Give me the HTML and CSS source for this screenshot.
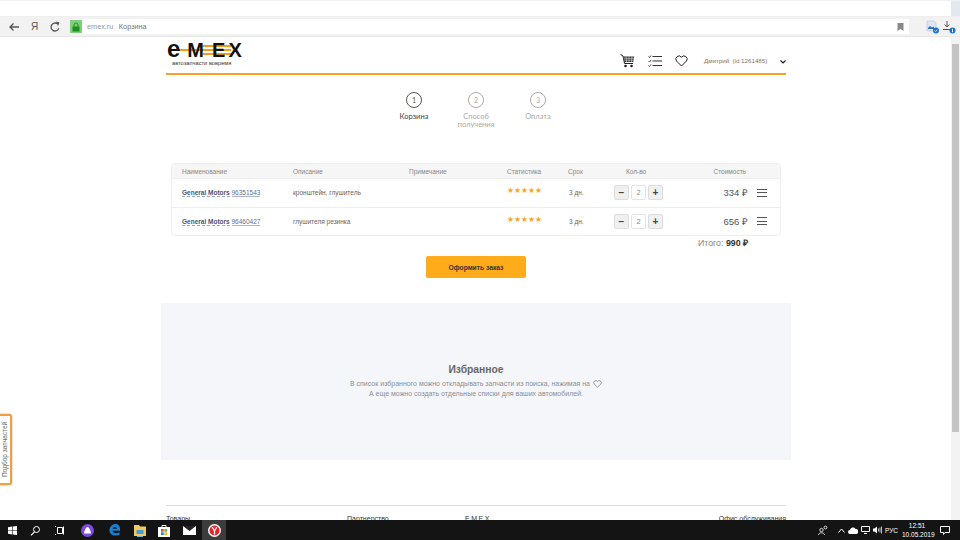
FILE: index.html

```html
<!DOCTYPE html>
<html lang="ru">
<head>
  <meta charset="UTF-8" />
  <title>Корзина</title>
  <link rel="stylesheet" href="styles.css">
</head>
<body>
<div class="screen">

  <div class="tabstrip"><div class="tabstrip-end"></div></div>

  <div class="toolbar">
    <svg class="tb-ico back" width="12" height="12" viewBox="0 0 12 12"><path d="M11 6H2M5.500 2.500 2 6l3.500 3.500" fill="none" stroke="#555" stroke-width="1.300"/></svg>
    <span class="ya">Я</span>
    <svg class="tb-ico reload" width="12" height="12" viewBox="0 0 12 12"><path d="M9.800 7.500A4 4 0 1 1 8.500 2.800" fill="none" stroke="#555" stroke-width="1.300"/><path d="M7 .5 10.500 1.500 9 5z" fill="#555"/></svg>
    <div class="address">
      <span class="lock-box">
        <svg width="8" height="10" viewBox="0 0 8 10"><path d="M2 5V3a2 2 0 0 1 4 0v2" fill="none" stroke="#1f8f1f"/><rect x=".5" y="4.500" width="7" height="5" fill="#1f8f1f"/></svg>
      </span>
      <span class="host">emex.ru</span>
      <span class="page-title">Корзина</span>
      <svg class="bookmark" width="7" height="8" viewBox="0 0 7 8"><path d="M.5 0h6v8L3.500 6 .5 8z" fill="#8a8a8a"/></svg>
    </div>
    <svg class="ext" width="14" height="14" viewBox="0 0 14 14"><path d="M1 1h7l2 2v8H1z" fill="#dfe6f2" stroke="#b9c4d6" stroke-width=".6"/><path d="M2 8l2-2 2 1.500 2-1v2.500H2z" fill="#2a6fc0"/><circle cx="10" cy="10.500" r="3" fill="#1a73d8"/><path d="M8.700 10.500l1 1 1.600-1.800" fill="none" stroke="#fff" stroke-width=".8"/></svg>
    <svg class="ext" width="14" height="14" viewBox="0 0 14 14"><path d="M5 1v6M2.500 4.500 5 7l2.500-2.500M1 9.500h8" fill="none" stroke="#555" stroke-width="1"/><circle cx="10.500" cy="10.500" r="3" fill="#1a73d8"/><rect x="10" y="8.800" width="1" height="3.400" fill="#fff"/></svg>
  </div>

  <div class="viewport">
    <div class="page">

      <header class="site-head">
        <div class="logo">
          <div class="logo-word"><span class="logo-e">e</span><span>M</span><span>E</span><span class="logo-x">X</span></div>
          <div class="logo-sub">автозапчасти вовремя</div>
        </div>
        <nav class="head-icons">
          <svg width="15" height="14" viewBox="0 0 15 14"><path d="M.5.500l2.500 1.500 1.500 7.500h8.500" fill="none" stroke="#222"/><path d="M3.200 2.500h11l-1 5.500H4.300z" fill="#333"/><path d="M3.500 4.300h10.500M4 6.200h9.500M6 2.500 6.500 8M9 2.500V8M12 2.500 11.500 8" stroke="#fff" stroke-width=".5"/><circle cx="5.500" cy="12" r="1.300" fill="#222"/><circle cx="11.500" cy="12" r="1.300" fill="#222"/></svg>
          <svg width="14" height="12" viewBox="0 0 14 12"><path d="M.5 1.500l1 1 1.500-2M.5 6l1 1 1.500-2M.5 10.500l1 1 1.500-2" fill="none" stroke="#333" stroke-width=".9"/><path d="M4.500 1.500H14M4.500 6H14M4.500 10.500H14" stroke="#333" stroke-width="1"/></svg>
          <svg width="13" height="12" viewBox="0 0 13 12"><path d="M6.500 11 1.500 6A3 3 0 0 1 6.500 2.200 3 3 0 0 1 11.500 6z" fill="none" stroke="#222" stroke-width="1"/></svg>
        </nav>
        <div class="user">Дмитрий&nbsp; (id 1261485)</div>
        <svg class="user-arrow" width="6" height="4" viewBox="0 0 6 4"><path d="M.5.500 3 3 5.500.5" fill="none" stroke="#222" stroke-width="1.200"/></svg>
      </header>

      <div class="steps">
        <div class="step active"><span class="step-num">1</span><span class="step-name">Корзина</span></div>
        <div class="step"><span class="step-num">2</span><span class="step-name">Способ получения</span></div>
        <div class="step"><span class="step-num">3</span><span class="step-name">Оплата</span></div>
      </div>

      <div class="cart">
        <div class="cart-row cart-head">
          <div>Наименование</div>
          <div>Описание</div>
          <div>Примечание</div>
          <div>Статистика</div>
          <div>Срок</div>
          <div class="qty-title">Кол-во</div>
          <div class="cost-title">Стоимость</div>
        </div>
        <div class="cart-row">
          <div><a class="brand">General Motors</a> <a class="num">96351543</a></div>
          <div>кронштейн, глушитель</div>
          <div></div>
          <div class="stars">★★★★★</div>
          <div class="term">3 дн.</div>
          <div class="qty"><span class="qty-btn">−</span><span class="qty-val">2</span><span class="qty-btn">+</span></div>
          <div class="price">334 ₽</div>
          <div class="burger"><span></span><span></span><span></span></div>
        </div>
        <div class="cart-row">
          <div><a class="brand">General Motors</a> <a class="num">96460427</a></div>
          <div>глушителя резинка</div>
          <div></div>
          <div class="stars">★★★★★</div>
          <div class="term">3 дн.</div>
          <div class="qty"><span class="qty-btn">−</span><span class="qty-val">2</span><span class="qty-btn">+</span></div>
          <div class="price">656 ₽</div>
          <div class="burger"><span></span><span></span><span></span></div>
        </div>
      </div>

      <div class="total">Итого: <b>990 ₽</b></div>

      <div class="order-wrap"><button class="order">Оформить заказ</button></div>

      <section class="favs">
        <h2>Избранное</h2>
        <p>В список избранного можно откладывать запчасти из поиска, нажимая на
          <svg width="9" height="8" viewBox="0 0 13 12"><path d="M6.500 11 1.500 6A3 3 0 0 1 6.500 2.200 3 3 0 0 1 11.500 6z" fill="none" stroke="#777" stroke-width="1.100"/></svg></p>
        <p>А еще можно создать отдельные списки для ваших автомобилей.</p>
      </section>

      <footer class="foot">
        <div>Товары</div>
        <div>Партнерство</div>
        <div class="foot-emex">EMEX</div>
        <div>Офис обслуживания</div>
      </footer>
    </div>

    <div class="scrollbar"><div class="scroll-thumb"></div></div>
    <div class="side-tab">Подбор запчастей</div>
  </div>

  <div class="taskbar">
    <svg class="task-ico" width="9" height="9" viewBox="0 0 9 9"><path d="M0 1.200 4 .6V4.200H0zM4.600.5 9 0V4.200H4.600zM0 4.800h4v3.600L0 7.800zM4.600 4.800H9V9L4.600 8.400z" fill="#fff"/></svg>
    <svg class="task-ico" width="11" height="11" viewBox="0 0 11 11"><circle cx="6.500" cy="4.500" r="3" fill="none" stroke="#fff"/><path d="M4.500 6.800 1 10.300" stroke="#fff" stroke-width="1.200"/></svg>
    <svg class="task-ico" width="10" height="9" viewBox="0 0 10 9"><path d="M1 .5h1M1 8.500h1M3.500 1.500h5v6h-5zM9.500.5v8" fill="none" stroke="#fff"/></svg>
    <svg class="task-ico wide" width="13" height="13" viewBox="0 0 13 13"><circle cx="6.500" cy="6.500" r="6.500" fill="#7b4be0"/><path d="M3 9.500C3.500 6 5 3 6.500 3S9.500 6 10 9.500z" fill="#fff"/></svg>
    <svg class="task-ico mid" width="12" height="12" viewBox="0 0 12 12"><path d="M11 6.800H3.500C3.800 9.500 7.500 10 10.500 8.300V10.800C6 12.800 .5 11 .5 6.300 .5 2.500 3.500 0 6.500 0 9.500 0 11.500 2.500 11 6.800zM3.600 4.800H8C8 2.500 4 2.500 3.600 4.800z" fill="#1582d8"/></svg>
    <svg class="task-ico tb-open" width="12" height="11" viewBox="0 0 12 11"><path d="M0 0h5l1 1.500h6V11H0z" fill="#f2c75c"/><rect x="2.500" y="5" width="7" height="4" fill="#3da0d8"/></svg>
    <svg class="task-ico tight" width="12" height="13" viewBox="0 0 12 13"><path d="M4 3V1.500h4V3" fill="none" stroke="#fff"/><rect y="3" width="12" height="10" fill="#fff"/><rect x="3" y="5" width="2.700" height="2.700" fill="#e5482d"/><rect x="6.300" y="5" width="2.700" height="2.700" fill="#6cb33f"/><rect x="3" y="8.300" width="2.700" height="2.700" fill="#1582d8"/><rect x="6.300" y="8.300" width="2.700" height="2.700" fill="#f5b81c"/></svg>
    <svg class="task-ico" width="13" height="9" viewBox="0 0 13 9"><rect width="13" height="9" fill="#fff"/><path d="M0 0 6.500 5 13 0z" fill="#222"/></svg>
    <div class="task-active"><svg width="13" height="13" viewBox="0 0 13 13"><circle cx="6.500" cy="6.500" r="6.500" fill="#fff"/><circle cx="6.500" cy="6.500" r="5" fill="#e3242b"/><path d="M4.200 3 6.500 7 8.800 3M6.500 7v3.500" fill="none" stroke="#fff" stroke-width="1.300"/></svg></div>
    <div class="tray">
      <svg width="10" height="10" viewBox="0 0 10 10"><circle cx="3.500" cy="5" r="1.700" fill="none" stroke="#fff" stroke-width=".8"/><circle cx="7.500" cy="2.500" r="1.400" fill="none" stroke="#fff" stroke-width=".8"/><path d="M.5 10c0-3 6-3 6 0" fill="none" stroke="#fff" stroke-width=".8"/></svg>
      <svg class="tray-up" width="7" height="5" viewBox="0 0 7 5"><path d="M.5 4.500 3.500 1l3 3.500" fill="none" stroke="#fff"/></svg>
      <svg width="10" height="7" viewBox="0 0 10 7"><path d="M2 7a2 2 0 0 1 0-4 3 3 0 0 1 5.500-1A2.500 2.500 0 0 1 8 7z" fill="#fff"/></svg>
      <svg width="9" height="8" viewBox="0 0 9 8"><path d="M.5.500h8v5h-8zM3 7.500h3" fill="none" stroke="#fff"/></svg>
      <svg width="9" height="8" viewBox="0 0 9 8"><path d="M0 2.500h1.500L4 .5v7L1.500 5.500H0z" fill="#fff"/><path d="M5.500 2.500v3M7 1.500v5M8.500.5v7" stroke="#fff" stroke-width=".7"/></svg>
      <span class="lang">РУС</span>
      <div class="clock"><div>12:51</div><div>10.05.2019</div></div>
      <svg class="notif" width="10" height="9" viewBox="0 0 10 9"><path d="M.5.500h9v6H5L3.500 8.500v-2H.5z" fill="none" stroke="#fff"/></svg>
    </div>
  </div>

</div>
</body>
</html>
```

FILE: styles.css

```css
* { box-sizing: border-box; }
html, body { margin: 0; height: 100%; overflow: hidden; }
body { font-family: "Liberation Sans", Arial, sans-serif; color: #555; background: #fff; }
svg { display: block; flex: none; }

.screen { width: 960px; height: 540px; display: flex; flex-direction: column; overflow: hidden; }

/* browser chrome */
.tabstrip { height: 17px; flex: none; display: flex; justify-content: flex-end; border-top: 1px solid #f0f1f3; border-bottom: 1px solid #eee; }
.tabstrip-end { width: 9px; background: #e3e7f0; }
.toolbar { height: 20px; flex: none; display: flex; align-items: center; background: #f2f2f2; border-bottom: 1px solid #e6e6e6; }
.tb-ico.back { margin-left: 8px; }
.ya { margin-left: 11px; width: 8px; font-size: 10px; color: #555; }
.tb-ico.reload { margin-left: 10px; }
.address { margin-left: 9px; width: 839px; height: 15px; flex: none; display: flex; align-items: center; background: #fff; font-size: 7.300px; }
.lock-box { width: 12px; height: 13px; margin-right: 5px; display: flex; align-items: center; justify-content: center; background: #7ed07a; }
.host { color: #999; margin-right: 5.500px; }
.page-title { color: #777; }
.bookmark { margin-left: auto; margin-right: 5px; }
.address + .ext { margin-left: 17px; }
.ext + .ext { margin-left: 2px; }

.viewport { flex: 1; position: relative; display: flex; min-height: 0; overflow: hidden; }
.page { width: 620px; margin-left: 166px; flex: none; }
.scrollbar { margin-left: auto; width: 9px; padding-top: 7px; background: #f3f3f3; }
.scroll-thumb { height: 388px; background: #c4c4c4; margin: 0 1px; }

/* site header */
.site-head { height: 38px; display: flex; align-items: flex-start; border-bottom: 2px solid #f7a128; }
.logo { width: 454px; flex: none; padding-top: 1px; }
.logo-word {
  width: 75px; height: 21px; display: flex; align-items: baseline; gap: 8px;
  font: bold 20px/21px "Liberation Sans", sans-serif; color: #111;
  background:
    linear-gradient(#f59a1b, #f59a1b) 37px 7px / 28px 2px no-repeat,
    linear-gradient(#f59a1b, #f59a1b) 11px 11px / 54px 2px no-repeat,
    linear-gradient(#f59a1b, #f59a1b) 37px 15px / 28px 2px no-repeat;
}
.logo-e { font-size: 24px; margin-left: 1px; margin-right: -1px; }
.logo-x { margin-left: -5px; }
.logo-sub { margin: 1px 0 0 6px; font-size: 5.700px; line-height: 7px; color: #333; white-space: nowrap; }
.head-icons { display: flex; align-items: center; gap: 13px; width: 84px; height: 14px; margin-top: 17px; flex: none; }
.user { margin-top: 20px; font-size: 6.200px; line-height: 8px; color: #777; white-space: nowrap; }
.user-arrow { margin-left: auto; margin-top: 23px; }

/* steps */
.steps { display: flex; justify-content: center; padding-top: 17px; height: 88px; }
.step { width: 62px; display: flex; flex-direction: column; align-items: center; font-family: Lato, sans-serif; color: #aaa; }
.step-num { width: 16px; height: 16px; border: 1px solid #aaa; border-radius: 50%; font-size: 7px; display: flex; align-items: center; justify-content: center; }
.step-name { margin-top: 5px; width: 44px; text-align: center; font-size: 7.500px; line-height: 8px; }
.step.active .step-num { border-color: #555; color: #555; }
.step.active .step-name { color: #444; }

/* cart table */
.cart { margin: 0 5px; width: 610px; border: 1px solid #eee; border-radius: 4px; overflow: hidden; }
.cart-row { display: grid; grid-template-columns: 111px 116px 98px 61px 46px 92px 42px 1fr; align-items: center; height: 28.500px; padding-left: 10px; font-size: 6.500px; color: #666; border-top: 1px solid #eee; }
.cart-head { height: 14px; border-top: 0; background: #f6f6f6; color: #888; }
.qty-title { padding-left: 12px; }
.cost-title { justify-self: end; padding-right: 2px; white-space: nowrap; }
.brand { font-weight: bold; color: #4a5676; border-bottom: 1px dashed #9aa5bf; }
.num { color: #5d6f95; border-bottom: 1px solid #aab4ca; }
.stars { color: #f9a825; font: 7.800px/8px "DejaVu Sans", sans-serif; margin-top: -3px; white-space: nowrap; }
.term { padding-left: 1px; }
.qty { display: flex; gap: 2px; }
.qty-btn { width: 15px; height: 15px; display: flex; align-items: center; justify-content: center; background: #f0f0f0; border: 1px solid #ddd; border-radius: 2px; font-size: 10px; font-weight: bold; color: #444; }
.qty-val { width: 15px; height: 15px; display: flex; align-items: center; justify-content: center; border: 1px solid #e4e4e4; border-radius: 2px; font-size: 7.500px; color: #888; }
.price { text-align: right; font-size: 9.500px; color: #555; white-space: nowrap; }
.burger { margin-left: 9px; width: 10px; display: flex; flex-direction: column; gap: 2.500px; }
.burger span { height: 1px; background: #555; }

.total { margin: 2px 0 0; padding-right: 38px; text-align: right; font-size: 8.800px; line-height: 11px; color: #888; }
.total b { color: #333; }

.order-wrap { display: flex; justify-content: center; margin-top: 7px; }
.order { width: 100px; height: 22px; padding: 0; border: none; border-radius: 2px; background: #ffab1a; color: #333; font: bold 6.700px "Liberation Sans", sans-serif; }

/* favourites */
.favs { width: 630px; height: 157px; margin: 25px 0 0 -5px; padding-top: 60px; background: #f5f6f9; text-align: center; }
.favs h2 { margin: 0 0 2px; font-size: 10.300px; line-height: 14px; color: #666; }
.favs p { margin: 0; font-size: 7px; line-height: 10px; color: #8b8f96; display: flex; justify-content: center; align-items: center; gap: 3px; }

.foot { margin-top: 45px; padding-top: 8px; border-top: 1px solid #ddd; display: grid; grid-template-columns: 181px 118px 1fr auto; font-size: 7px; line-height: 9px; color: #333; }
.foot-emex { letter-spacing: 1.500px; }

/* side tab */
.side-tab { position: absolute; left: 0; top: 377px; width: 12px; height: 71px; background: #fff; border: 2px solid #f0a040; border-right: 0; border-radius: 3px 0 0 3px; box-shadow: 0 0 2px #999; writing-mode: vertical-rl; transform: rotate(180deg); text-align: center; font-size: 6.500px; line-height: 10px; color: #666; white-space: nowrap; }

/* windows taskbar */
.taskbar { height: 20px; flex: none; display: flex; align-items: center; background: #141414; color: #fff; }
.task-ico { margin-left: 13px; }
.task-ico:first-child { margin-left: 8px; }
.task-ico.wide { margin-left: 17px; }
.task-ico.mid { margin-left: 15px; }
.task-ico.tight { margin-left: 12px; }
.tb-open { box-shadow: 0 4px 0 -3px #7ab4e0; }
.task-active { margin-left: 6px; width: 24px; height: 20px; display: flex; align-items: center; justify-content: center; background: #3c3c3c; }
.tray { margin-left: auto; display: flex; align-items: center; gap: 3px; padding-right: 10px; }
.tray-up { margin-left: 7px; }
.lang { font-size: 6.500px; margin-right: 1px; }
.clock { width: 30px; font-size: 6.500px; line-height: 9px; text-align: center; white-space: nowrap; }
.notif { margin-left: 5px; }
```
